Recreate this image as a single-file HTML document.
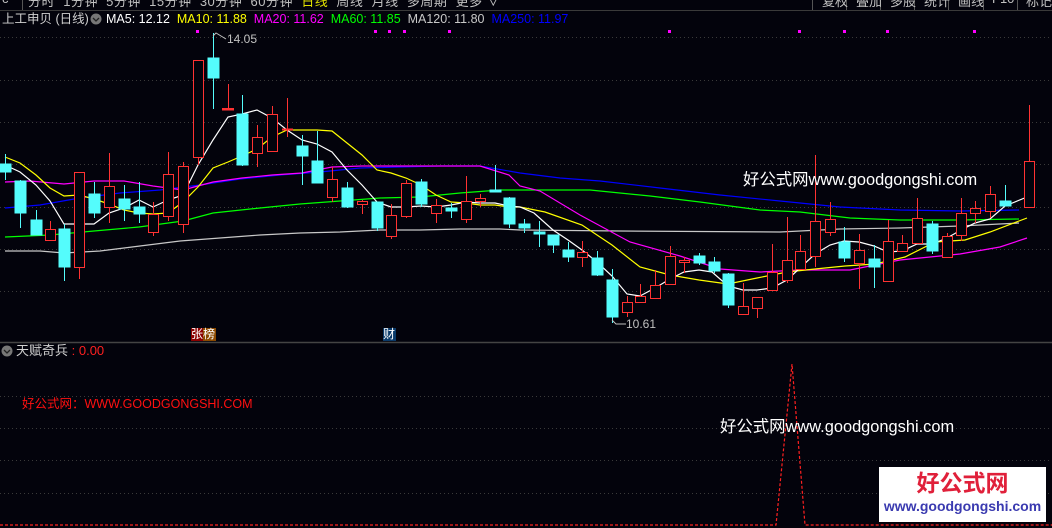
<!DOCTYPE html>
<html><head><meta charset="utf-8">
<style>
html,body{margin:0;padding:0;background:#03030c;width:1052px;height:528px;overflow:hidden;font-family:"Liberation Sans","Noto Sans CJK SC",sans-serif;}
.abs{position:absolute;white-space:nowrap;}
</style></head><body>
<div style="position:relative;width:1052px;height:528px;background:#03030c;overflow:hidden;">
<svg width="1052" height="528" style="position:absolute;left:0;top:0" xmlns="http://www.w3.org/2000/svg">
<line x1="0" y1="10.5" x2="1052" y2="10.5" stroke="#3a3a3a" stroke-width="1"/>
<g stroke="#555" stroke-width="1">
<line x1="22.5" y1="0" x2="22.5" y2="10"/>
<line x1="812.5" y1="0" x2="812.5" y2="10"/><line x1="846.5" y1="0" x2="846.5" y2="10"/><line x1="880.5" y1="0" x2="880.5" y2="10"/><line x1="914.5" y1="0" x2="914.5" y2="10"/><line x1="948.5" y1="0" x2="948.5" y2="10"/><line x1="983.5" y1="0" x2="983.5" y2="10"/><line x1="1017.5" y1="0" x2="1017.5" y2="10"/>
</g>
<g stroke="#3a3a3a" stroke-width="1" stroke-dasharray="1,3">
<line x1="0" y1="37.5" x2="1052" y2="37.5"/>
<line x1="0" y1="80.5" x2="1052" y2="80.5"/>
<line x1="0" y1="122.5" x2="1052" y2="122.5"/>
<line x1="0" y1="164.5" x2="1052" y2="164.5"/>
<line x1="0" y1="207.5" x2="1052" y2="207.5"/>
<line x1="0" y1="249.5" x2="1052" y2="249.5"/>
<line x1="0" y1="291.5" x2="1052" y2="291.5"/>
<line x1="0" y1="396.5" x2="1052" y2="396.5"/>
<line x1="0" y1="428.5" x2="1052" y2="428.5"/>
<line x1="0" y1="460.5" x2="1052" y2="460.5"/>
<line x1="0" y1="493.5" x2="1052" y2="493.5"/>
</g>
<line x1="0" y1="342.5" x2="1052" y2="342.5" stroke="#444" stroke-width="1.5"/>
<g fill="#ff00ff">
<rect x="196" y="30" width="3" height="3"/><rect x="374" y="30" width="3" height="3"/><rect x="388" y="30" width="3" height="3"/><rect x="403" y="30" width="3" height="3"/><rect x="448" y="30" width="3" height="3"/><rect x="668" y="30" width="3" height="3"/><rect x="798" y="30" width="3" height="3"/><rect x="843" y="30" width="3" height="3"/><rect x="886" y="30" width="3" height="3"/><rect x="973" y="30" width="3" height="3"/>
</g>
<g fill="none" stroke-width="1.2">
<polyline stroke="#c8c8c8" points="5,251 40,251 64,253 100,251 140,246 180,241 220,238 260,235 300,233 340,232 380,230 420,230 460,229 500,229 520,230 620,231 780,232 840,229 900,228 960,226 1019,223"/>
<polyline stroke="#0000ff" points="5,208 40,205 80,198 120,193 160,190 200,185 240,179 280,175 320,172 360,168 400,167 440,166 480,166 520,173 560,178 600,181 660,188 720,195 780,201 840,207 900,210 960,211 1019,210"/>
<polyline stroke="#00ff00" points="5,237 50,235 94,231 139,227 183,221 213,213 260,208 300,204 340,201 380,198 420,197 460,193 500,190 520,190 590,190 650,196 700,202 760,210 800,212 850,218 900,220 960,220 1019,219"/>
<polyline stroke="#ff00ff" points="5,182 30,181 64,184 94,181 124,181 153,186 183,190 213,182 242,178 272,175 302,173 332,167 362,166 377,166 412,166 480,166 509,175 520,186 540,191 580,215 630,242 680,256 720,269 760,272 800,270 850,270 900,260 960,254 1000,247 1027,238"/>
<polyline stroke="#ffff00" points="5,157 20,163 36,175 50,188 64,196 79,195 94,199 109,204 124,210 139,213 153,214 168,213 183,202 198,187 213,168 228,162 242,156 257,149 272,137 287,130 302,130 317,130 332,131 347,143 362,155 377,170 391,173 406,178 421,185 436,195 451,202 466,203 480,205 495,205 509,207 520,207 545,212 582,225 612,245 640,267 670,275 699,280 728,284 757,278 787,272 815,269 845,266 875,264 905,257 935,242 965,240 990,232 1027,218"/>
<polyline stroke="#ffffff" points="5,165 20,172 36,185 50,201 64,224 79,224 94,224 109,213 124,208 139,200 153,207 168,200 183,195 198,165 213,140 228,117 242,114 257,110 272,118 287,130 302,140 317,144 332,152 347,170 362,185 377,202 391,207 406,207 421,206 436,207 451,205 466,202 480,203 495,203 509,206 520,207 534,213 553,230 568,240 582,250 597,262 612,276 627,294 640,296 655,288 670,279 684,272 699,270 712,272 728,286 743,290 757,290 772,288 787,280 800,268 815,254 830,245 844,241 859,242 874,246 888,252 902,251 917,244 932,244 947,238 961,230 975,223 990,219 1005,206 1027,197"/>
</g>
<g stroke="#54fcfc" fill="#54fcfc" stroke-width="1">
<line x1="5.5" y1="154" x2="5.5" y2="180"/><rect x="0" y="164" width="11" height="8"/>
<line x1="20.5" y1="180" x2="20.5" y2="228"/><rect x="15" y="181" width="11" height="32"/>
<line x1="36.5" y1="210" x2="36.5" y2="235"/><rect x="31" y="220" width="11" height="15"/>
<line x1="64.5" y1="224" x2="64.5" y2="281"/><rect x="59" y="229" width="11" height="38"/>
<line x1="94.5" y1="182" x2="94.5" y2="218"/><rect x="89" y="194" width="11" height="19"/>
<line x1="124.5" y1="185" x2="124.5" y2="221"/><rect x="119" y="199" width="11" height="10"/>
<line x1="139.5" y1="182" x2="139.5" y2="223"/><rect x="134" y="207" width="11" height="7"/>
<line x1="213.5" y1="33" x2="213.5" y2="109"/><rect x="208" y="58" width="11" height="20"/>
<line x1="242.5" y1="95" x2="242.5" y2="166"/><rect x="237" y="114" width="11" height="51"/>
<line x1="302.5" y1="135" x2="302.5" y2="185"/><rect x="297" y="146" width="11" height="10"/>
<line x1="317.5" y1="131" x2="317.5" y2="183"/><rect x="312" y="161" width="11" height="22"/>
<line x1="347.5" y1="182" x2="347.5" y2="208"/><rect x="342" y="188" width="11" height="19"/>
<line x1="377.5" y1="202" x2="377.5" y2="231"/><rect x="372" y="202" width="11" height="26"/>
<line x1="421.5" y1="179" x2="421.5" y2="207"/><rect x="416" y="182" width="11" height="22"/>
<line x1="451.5" y1="203" x2="451.5" y2="218"/><rect x="446" y="208" width="11" height="3"/>
<line x1="495.5" y1="165" x2="495.5" y2="192"/><rect x="490" y="190" width="11" height="2"/>
<line x1="509.5" y1="197" x2="509.5" y2="228"/><rect x="504" y="198" width="11" height="26"/>
<line x1="524.5" y1="219" x2="524.5" y2="233"/><rect x="519" y="224" width="11" height="4"/>
<line x1="539.5" y1="221" x2="539.5" y2="247"/><rect x="534" y="232" width="11" height="2"/>
<line x1="553.5" y1="235" x2="553.5" y2="253"/><rect x="548" y="235" width="11" height="10"/>
<line x1="568.5" y1="242" x2="568.5" y2="262"/><rect x="563" y="250" width="11" height="7"/>
<line x1="597.5" y1="251" x2="597.5" y2="276"/><rect x="592" y="258" width="11" height="17"/>
<line x1="612.5" y1="269" x2="612.5" y2="323"/><rect x="607" y="280" width="11" height="37"/>
<line x1="699.5" y1="253" x2="699.5" y2="265"/><rect x="694" y="256" width="11" height="7"/>
<line x1="714.5" y1="257" x2="714.5" y2="273"/><rect x="709" y="262" width="11" height="9"/>
<line x1="728.5" y1="273" x2="728.5" y2="308"/><rect x="723" y="274" width="11" height="31"/>
<line x1="844.5" y1="227" x2="844.5" y2="262"/><rect x="839" y="242" width="11" height="16"/>
<line x1="874.5" y1="245" x2="874.5" y2="288"/><rect x="869" y="259" width="11" height="8"/>
<line x1="932.5" y1="221" x2="932.5" y2="254"/><rect x="927" y="224" width="11" height="27"/>
<line x1="1005.5" y1="185" x2="1005.5" y2="206"/><rect x="1000" y="201" width="11" height="5"/>
</g>
<g stroke="#ff3232" fill="#03030c" stroke-width="1">
<line x1="50.5" y1="221" x2="50.5" y2="241"/><rect x="45.5" y="229.5" width="10" height="11"/>
<line x1="79.5" y1="172" x2="79.5" y2="279"/><rect x="74.5" y="172.5" width="10" height="95"/>
<line x1="109.5" y1="153" x2="109.5" y2="223"/><rect x="104.5" y="186.5" width="10" height="21"/>
<line x1="153.5" y1="202" x2="153.5" y2="236"/><rect x="148.5" y="214.5" width="10" height="18"/>
<line x1="168.5" y1="152" x2="168.5" y2="221"/><rect x="163.5" y="174.5" width="10" height="42"/>
<line x1="183.5" y1="162" x2="183.5" y2="233"/><rect x="178.5" y="166.5" width="10" height="58"/>
<line x1="198.5" y1="60" x2="198.5" y2="165"/><rect x="193.5" y="60.5" width="10" height="97"/>
<line x1="228.5" y1="84" x2="228.5" y2="110"/><rect x="222.5" y="108.5" width="11" height="1.5" fill="#ff3232"/>
<line x1="257.5" y1="125" x2="257.5" y2="167"/><rect x="252.5" y="137.5" width="10" height="16"/>
<line x1="272.5" y1="106" x2="272.5" y2="152"/><rect x="267.5" y="114.5" width="10" height="37"/>
<line x1="287.5" y1="98" x2="287.5" y2="137"/><rect x="282.5" y="129" width="10" height="1" fill="#ff3232"/>
<line x1="332.5" y1="167" x2="332.5" y2="202"/><rect x="327.5" y="179.5" width="10" height="18"/>
<line x1="362.5" y1="200" x2="362.5" y2="214"/><rect x="357.5" y="201.5" width="10" height="3"/>
<line x1="391.5" y1="204" x2="391.5" y2="239"/><rect x="386.5" y="215.5" width="10" height="21"/>
<line x1="406.5" y1="180" x2="406.5" y2="218"/><rect x="401.5" y="183.5" width="10" height="33"/>
<line x1="436.5" y1="199" x2="436.5" y2="223"/><rect x="431.5" y="205.5" width="10" height="8"/>
<line x1="466.5" y1="176" x2="466.5" y2="223"/><rect x="461.5" y="201.5" width="10" height="18"/>
<line x1="480.5" y1="194" x2="480.5" y2="207"/><rect x="475.5" y="198.5" width="10" height="3"/>
<line x1="582.5" y1="241" x2="582.5" y2="267"/><rect x="577.5" y="252.5" width="10" height="5"/>
<line x1="627.5" y1="296" x2="627.5" y2="317"/><rect x="622.5" y="302.5" width="10" height="10"/>
<line x1="640.5" y1="284" x2="640.5" y2="302"/><rect x="635.5" y="296.5" width="10" height="6"/>
<line x1="655.5" y1="270" x2="655.5" y2="298"/><rect x="650.5" y="285.5" width="10" height="13"/>
<line x1="670.5" y1="246" x2="670.5" y2="284"/><rect x="665.5" y="256.5" width="10" height="28"/>
<line x1="684.5" y1="257" x2="684.5" y2="273"/><rect x="679.5" y="260.5" width="10" height="2"/>
<line x1="743.5" y1="283" x2="743.5" y2="314"/><rect x="738.5" y="306.5" width="10" height="8"/>
<line x1="757.5" y1="297" x2="757.5" y2="318"/><rect x="752.5" y="297.5" width="10" height="11"/>
<line x1="772.5" y1="244" x2="772.5" y2="290"/><rect x="767.5" y="272.5" width="10" height="18"/>
<line x1="787.5" y1="217" x2="787.5" y2="283"/><rect x="782.5" y="260.5" width="10" height="20"/>
<line x1="800.5" y1="235" x2="800.5" y2="269"/><rect x="795.5" y="251.5" width="10" height="18"/>
<line x1="815.5" y1="155" x2="815.5" y2="267"/><rect x="810.5" y="221.5" width="10" height="35"/>
<line x1="830.5" y1="202" x2="830.5" y2="236"/><rect x="825.5" y="219.5" width="10" height="13"/>
<line x1="859.5" y1="234" x2="859.5" y2="289"/><rect x="854.5" y="250.5" width="10" height="13"/>
<line x1="888.5" y1="220" x2="888.5" y2="281"/><rect x="883.5" y="241.5" width="10" height="40"/>
<line x1="902.5" y1="235" x2="902.5" y2="251"/><rect x="897.5" y="243.5" width="10" height="8"/>
<line x1="917.5" y1="198" x2="917.5" y2="243"/><rect x="912.5" y="218.5" width="10" height="25"/>
<line x1="947.5" y1="233" x2="947.5" y2="257"/><rect x="942.5" y="236.5" width="10" height="21"/>
<line x1="961.5" y1="198" x2="961.5" y2="241"/><rect x="956.5" y="213.5" width="10" height="22"/>
<line x1="975.5" y1="201" x2="975.5" y2="223"/><rect x="970.5" y="208.5" width="10" height="5"/>
<line x1="990.5" y1="186" x2="990.5" y2="218"/><rect x="985.5" y="194.5" width="10" height="17"/>
<line x1="1029.5" y1="105" x2="1029.5" y2="207"/><rect x="1024.5" y="161.5" width="10" height="46"/>
</g>
<polyline points="213,36 216,33 226,39" fill="none" stroke="#c0c0c0" stroke-width="1"/>
<polyline points="612,320 616,324 626,324" fill="none" stroke="#c0c0c0" stroke-width="1"/>
<g fill="none" stroke="#ff2020" stroke-width="1.2" stroke-dasharray="3,2">
<polyline points="0,525 776,525 792,364 805,525 1052,525"/>
</g>
<circle cx="96" cy="19" r="5.5" fill="#777"/><polyline points="93,18 96,21 99,18" fill="none" stroke="#222" stroke-width="1.3"/>
<circle cx="7" cy="351" r="5.5" fill="#777"/><polyline points="4,350 7,353 10,350" fill="none" stroke="#222" stroke-width="1.3"/>
</svg>

<div class="abs" style="left:28px;top:-9px;font-size:13px;color:#c0c0c0;letter-spacing:0.5px;">分时 &nbsp;1分钟 &nbsp;5分钟 &nbsp;15分钟 &nbsp;30分钟 &nbsp;60分钟 &nbsp;<span style="color:#e0e000">日线</span> &nbsp;周线 &nbsp;月线 &nbsp;多周期 &nbsp;更多 ∨</div>
<div class="abs" style="left:822px;top:-9px;font-size:13px;color:#c0c0c0;">复权</div>
<div class="abs" style="left:856px;top:-9px;font-size:13px;color:#c0c0c0;">叠加</div>
<div class="abs" style="left:890px;top:-9px;font-size:13px;color:#c0c0c0;">多股</div>
<div class="abs" style="left:924px;top:-9px;font-size:13px;color:#c0c0c0;">统计</div>
<div class="abs" style="left:958px;top:-9px;font-size:13px;color:#c0c0c0;">画线</div>
<div class="abs" style="left:992px;top:-9px;font-size:13px;color:#c0c0c0;">F10</div>
<div class="abs" style="left:1026px;top:-9px;font-size:13px;color:#c0c0c0;">标记</div>
<div class="abs" style="left:2px;top:-9px;font-size:13px;color:#c0c0c0;">c</div>

<div class="abs" style="left:2px;top:11px;font-size:12.5px;line-height:16px;color:#d0d0d0;">上工申贝 (日线)</div>
<div class="abs" style="left:106px;top:11px;font-size:12.5px;line-height:16px;">
<span style="color:#ffffff">MA5: 12.12</span>&nbsp; <span style="color:#ffff00">MA10: 11.88</span>&nbsp; <span style="color:#ff00ff">MA20: 11.62</span>&nbsp; <span style="color:#00ff00">MA60: 11.85</span>&nbsp; <span style="color:#c8c8c8">MA120: 11.80</span>&nbsp; <span style="color:#0000ff">MA250: 11.97</span></div>

<div class="abs" style="left:227px;top:32px;font-size:12px;color:#c0c0c0;">14.05</div>
<div class="abs" style="left:626px;top:317px;font-size:12px;color:#c0c0c0;">10.61</div>

<div class="abs" style="left:743px;top:166px;font-size:16.4px;color:#ffffff;">好公式网www.goodgongshi.com</div>
<div class="abs" style="left:720px;top:413px;font-size:16.4px;color:#ffffff;">好公式网www.goodgongshi.com</div>

<div class="abs" style="left:191px;top:328px;width:12px;height:13px;background:#8b0000;color:#fff;font-size:12px;line-height:13px;">张</div>
<div class="abs" style="left:203px;top:328px;width:13px;height:13px;background:#8b4a00;color:#fff;font-size:12px;line-height:13px;">榜</div>
<div class="abs" style="left:383px;top:328px;width:13px;height:13px;background:#0a3a6a;color:#fff;font-size:12px;line-height:13px;">财</div>

<div class="abs" style="left:16px;top:343px;font-size:13px;line-height:16px;color:#d0d0d0;">天赋奇兵 <span style="color:#ff2020">: 0.00</span></div>
<div class="abs" style="left:22px;top:393px;font-size:12.5px;color:#ff1010;">好公式网：WWW.GOODGONGSHI.COM</div>

<div class="abs" style="left:879px;top:467px;width:167px;height:55px;background:#ffffff;">
<div style="position:absolute;left:0;width:167px;top:3px;text-align:center;font-size:23px;font-weight:bold;color:#e0203a;line-height:27px;">好公式网</div>
<div style="position:absolute;left:0;width:167px;top:31px;text-align:center;font-size:14px;font-weight:bold;color:#3a3ab0;line-height:16px;">www.goodgongshi.com</div>
</div>
</div>
</body></html>
